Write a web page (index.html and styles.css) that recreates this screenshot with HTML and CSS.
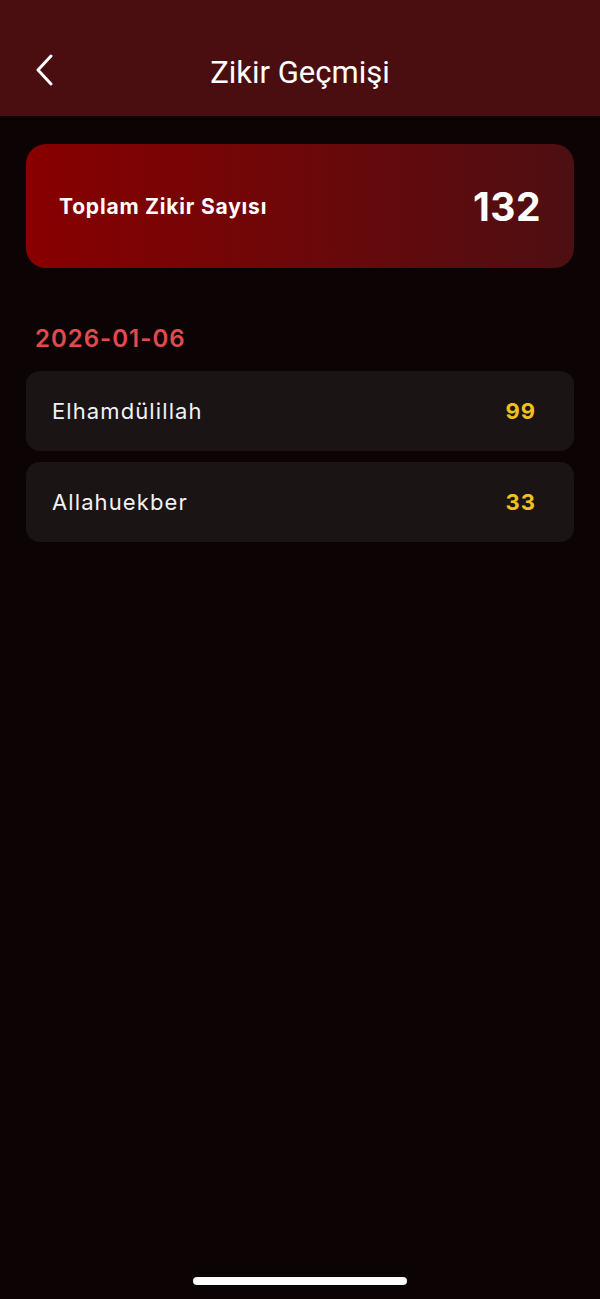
FILE: index.html
```html
<!DOCTYPE html>
<html lang="tr">
<head>
<meta charset="utf-8">
<title>Zikir Geçmişi</title>
<link rel="stylesheet" href="styles.css">
</head>
<body>
<div class="screen">
  <header class="topbar">
    <button class="back" aria-label="Geri">
      <svg width="20" height="32" viewBox="0 0 20 32"><path d="M16 2 L3 16 L16 30" fill="none" stroke="#fff" stroke-width="3" stroke-linecap="round" stroke-linejoin="round"/></svg>
    </button>
    <h1 class="title">Zikir Geçmişi</h1>
  </header>
  <main class="content">
    <section class="total">
      <span class="total-label">Toplam Zikir Sayısı</span>
      <span class="total-value">132</span>
    </section>
    <h2 class="date">2026-01-06</h2>
    <ul class="list">
      <li class="row"><span class="name">Elhamdülillah</span><span class="count">99</span></li>
      <li class="row"><span class="name">Allahuekber</span><span class="count">33</span></li>
    </ul>
  </main>
  <div class="home-bar"></div>
</div>
</body>
</html>
```
FILE: styles.css
```css
* { box-sizing: border-box; }
html, body { margin: 0; padding: 0; }
body {
  background: #0c0404;
  font-family: "Inter", "Roboto", "Liberation Sans", sans-serif;
  color: #fff;
}
.screen {
  width: 600px;
  height: 1299px;
  display: flex;
  flex-direction: column;
  position: relative;
  overflow: hidden;
}
.topbar {
  height: 116px;
  background: #4a0d10;
  position: relative;
  display: flex;
  align-items: center;
  justify-content: center;
  padding-top: 28px;
}
.back {
  position: absolute;
  left: 34px;
  top: 54px;
  background: none;
  border: 0;
  padding: 0;
  width: 22px;
  height: 32px;
}
.title {
  margin: 0;
  font-family: "Roboto", "Liberation Sans", sans-serif;
  font-weight: 400;
  font-size: 31px;
  letter-spacing: 0;
  color: #fff;
}
.content {
  padding: 28px 26px 0;
  display: flex;
  flex-direction: column;
}
.total {
  height: 124px;
  border-radius: 20px;
  background: linear-gradient(90deg, #880000 0%, #6a080a 55%, #4d0f12 100%);
  display: flex;
  align-items: center;
  justify-content: space-between;
  padding: 0 33px 0 33px;
}
.total-label {
  font-size: 21px;
  font-weight: 700;
  letter-spacing: 0.8px;
}
.total-value {
  font-size: 39px;
  font-weight: 700;
  letter-spacing: 0.5px;
}
.date {
  margin: 56px 0 0 9px;
  font-size: 24px;
  font-weight: 600;
  letter-spacing: 1px;
  color: #e24a4e;
  line-height: 30px;
}
.list {
  list-style: none;
  margin: 17px 0 0;
  padding: 0;
  display: flex;
  flex-direction: column;
  gap: 11px;
}
.row {
  height: 80px;
  border-radius: 14px;
  background: #1b1415;
  display: flex;
  align-items: center;
  justify-content: space-between;
  padding: 0 38px 0 26px;
}
.name {
  font-size: 22px;
  font-weight: 400;
  letter-spacing: 1.1px;
  color: #f2f2f2;
}
.count {
  font-size: 22px;
  font-weight: 700;
  letter-spacing: 1px;
  color: #f0c020;
}
.home-bar {
  position: absolute;
  left: 193px;
  top: 1277px;
  width: 214px;
  height: 8px;
  border-radius: 4px;
  background: #fff;
}
```
